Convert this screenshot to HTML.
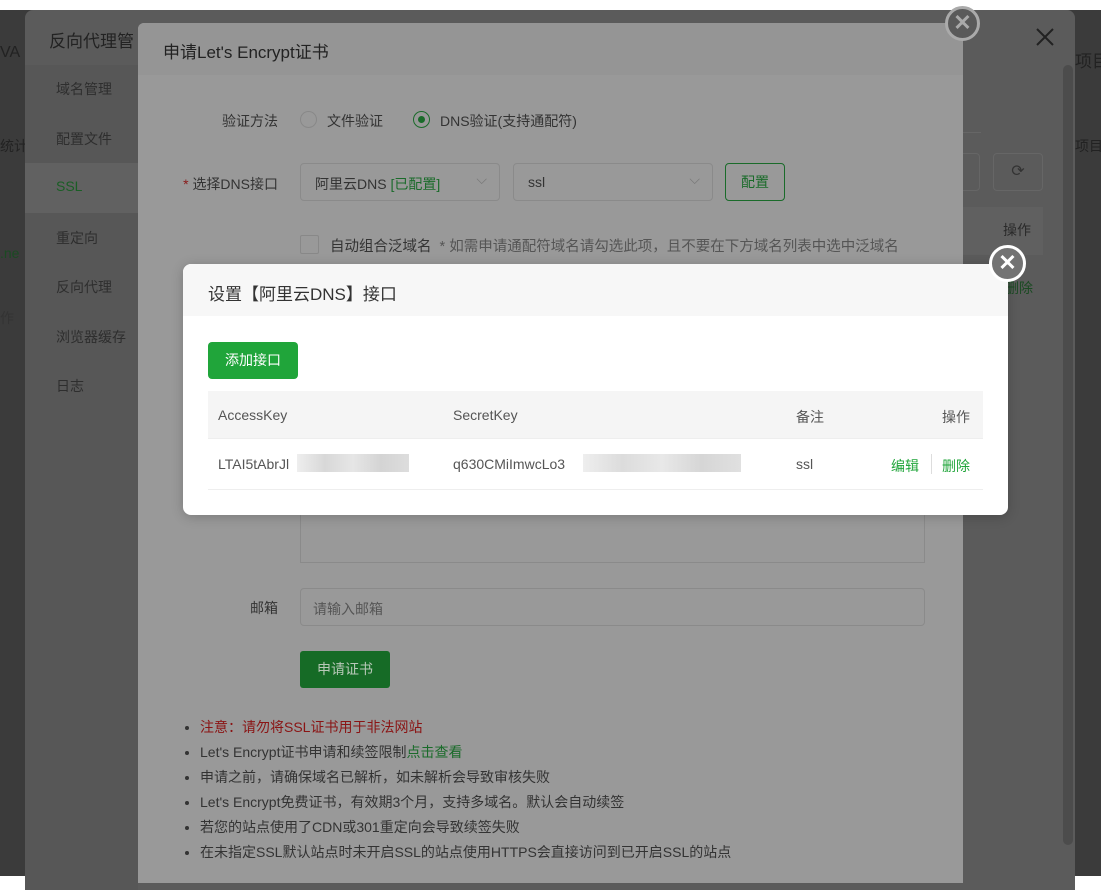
<!DOCTYPE html>
<html><head><meta charset="utf-8"><style>
*{margin:0;padding:0;box-sizing:border-box}
body{width:1101px;height:876px;overflow:hidden;background:#fff;position:relative;font-family:"Liberation Sans","Noto Sans CJK SC",sans-serif;color:#333}
.abs{position:absolute;white-space:nowrap}
.page{left:0;top:10px;width:1101px;height:866px;background:#3b3b3b}
.outer{left:25px;top:10px;width:1050px;height:880px;background:#5b5b5b;border-radius:8px 8px 0 0;overflow:hidden}
.side{left:0;top:55px;width:113px;height:830px;background:#575757}
.side div{position:absolute;left:31px;font-size:14px;color:#2e2e2e}
.mid{left:138px;top:23px;width:825px;height:860px;background:#999;border-radius:6px 6px 0 0;overflow:hidden}
.midh{left:0;top:0;width:825px;height:52px;background:#959595;font-size:17px;color:#222;padding:15px 0 0 25px}
.lbl{font-size:14px;color:#333;text-align:right;width:140px}
.inp{border:1px solid #8a8a8a;border-radius:4px}
.inner{left:183px;top:264px;width:825px;height:251px;background:#fff;border-radius:8px;overflow:hidden;box-shadow:0 2px 12px rgba(0,0,0,.2)}
.close{border-radius:50%;}
ul li{font-size:14px;line-height:25px;color:#333}
</style></head><body>
<div class="abs page"></div>
<div class="abs" style="left:0;top:44px;font-size:16px;color:#222">VA</div>
<div class="abs" style="left:0;top:136px;font-size:14px;color:#222">统计</div>
<div class="abs" style="left:0;top:245px;font-size:14px;color:#1a4a22">.ne</div>
<div class="abs" style="left:0;top:308px;font-size:14px;color:#333">作</div>
<div class="abs" style="left:1075px;top:47px;font-size:17px;color:#222">项目</div>
<div class="abs" style="left:1075px;top:136px;font-size:14px;color:#222">项目</div>
<div class="abs outer">
 <div class="abs" style="left:24px;top:17px;font-size:17px;color:#222">反向代理管</div>
 <div class="abs side">
  <div style="top:14px">域名管理</div>
  <div style="top:64px">配置文件</div>
  <div style="left:0;top:98px;width:113px;height:50px;background:#616161"></div>
  <div style="top:113px;color:#1a5e25">SSL</div>
  <div style="top:163px">重定向</div>
  <div style="top:212px">反向代理</div>
  <div style="top:262px">浏览器缓存</div>
  <div style="top:311px">日志</div>
 </div>
 <svg class="abs" style="left:1010px;top:17px" width="20" height="20"><path d="M2 2L18 18M18 2L2 18" stroke="#222" stroke-width="2"/></svg>
 <div class="abs" style="left:938px;top:122px;width:18px;height:1px;background:#666"></div>
 <div class="abs inp" style="left:915px;top:143px;width:40px;height:38px;border-color:#666"></div>
 <div class="abs inp" style="left:968px;top:143px;width:50px;height:38px;border-color:#666;text-align:center;line-height:36px;color:#333;font-size:16px">⟳</div>
 <div class="abs" style="left:938px;top:197px;width:80px;height:48px;background:#606060"></div>
 <div class="abs" style="left:978px;top:210px;font-size:14px;color:#2a2a2a">操作</div>
 <div class="abs" style="left:980px;top:268px;font-size:14px;color:#1a4a22">删除</div>
 <div class="abs" style="left:1038px;top:55px;width:10px;height:780px;background:#4c4c4c;border-radius:5px"></div>
</div>
<div class="abs mid">
 <div class="abs midh">申请Let's Encrypt证书</div>
 <div class="abs lbl" style="left:0;top:88px">验证方法</div>
 <div class="abs" style="left:162px;top:88px;width:17px;height:17px;border:1px solid #888;border-radius:50%"></div>
 <div class="abs" style="left:189px;top:88px;font-size:14px">文件验证</div>
 <div class="abs" style="left:275px;top:88px;width:17px;height:17px;border:1px solid #1a6b2a;border-radius:50%"><div style="margin:4px;width:7px;height:7px;border-radius:50%;background:#1a6b2a"></div></div>
 <div class="abs" style="left:302px;top:88px;font-size:14px">DNS验证(支持通配符)</div>
 <div class="abs lbl" style="left:0;top:151px"><span style="color:#8a1a1a">* </span>选择DNS接口</div>
 <div class="abs inp" style="left:162px;top:140px;width:200px;height:38px;padding:10px 14px;font-size:14px;color:#333">阿里云DNS <span style="color:#1a6b2a">[已配置]</span><span style="position:absolute;right:12px;top:7px;color:#777">⌵</span></div>
 <div class="abs inp" style="left:375px;top:140px;width:200px;height:38px;padding:10px 14px;font-size:14px;color:#333">ssl<span style="position:absolute;right:12px;top:7px;color:#777">⌵</span></div>
 <div class="abs" style="left:587px;top:140px;width:60px;height:38px;border:1px solid #1a6b2a;border-radius:4px;color:#1a6b2a;font-size:14px;text-align:center;line-height:36px">配置</div>
 <div class="abs" style="left:162px;top:212px;width:19px;height:19px;border:1px solid #888;border-radius:2px"></div>
 <div class="abs" style="left:192px;top:212px;font-size:14.5px">自动组合泛域名 <span style="color:#555">&nbsp;* 如需申请通配符域名请勾选此项，且不要在下方域名列表中选中泛域名</span></div>
 <div class="abs" style="left:162px;top:260px;width:625px;height:280px;border:1px solid #8a8a8a;border-top:none"></div>
 <div class="abs lbl" style="left:0;top:575px">邮箱</div>
 <div class="abs inp" style="left:162px;top:565px;width:625px;height:38px;padding:10px 12px;font-size:14px;color:#555">请输入邮箱</div>
 <div class="abs" style="left:162px;top:628px;width:90px;height:37px;background:#166b26;border-radius:3px;color:#b8c8b8;font-size:14px;text-align:center;line-height:37px">申请证书</div>
 <ul class="abs" style="left:62px;top:692px;list-style:disc;padding-left:0">
  <li><span style="color:#8a1414">注意：请勿将SSL证书用于非法网站</span></li>
  <li>Let's Encrypt证书申请和续签限制<span style="color:#1a6b2a">点击查看</span></li>
  <li>申请之前，请确保域名已解析，如未解析会导致审核失败</li>
  <li>Let's Encrypt免费证书，有效期3个月，支持多域名。默认会自动续签</li>
  <li>若您的站点使用了CDN或301重定向会导致续签失败</li>
  <li>在未指定SSL默认站点时未开启SSL的站点使用HTTPS会直接访问到已开启SSL的站点</li>
 </ul>
</div>
<div class="abs close" style="left:945px;top:6px;width:35px;height:35px;background:#5a5a5a;border:3px solid #aaa;color:#aaa;text-align:center;line-height:28px;font-size:22px;font-weight:bold">✕</div>
<div class="abs inner">
 <div class="abs" style="left:0;top:0;width:825px;height:52px;background:#f7f7f7;font-size:17px;color:#333;padding:16px 0 0 25px">设置【阿里云DNS】接口</div>
 <div class="abs" style="left:25px;top:78px;width:90px;height:37px;background:#20a53a;border-radius:4px;color:#fff;font-size:14px;text-align:center;line-height:37px">添加接口</div>
 <div class="abs" style="left:25px;top:127px;width:775px;height:48px;background:#f5f5f5;border-bottom:1px solid #eee"></div>
 <div class="abs" style="left:35px;top:143px;font-size:14px;color:#555">AccessKey</div>
 <div class="abs" style="left:270px;top:143px;font-size:14px;color:#555">SecretKey</div>
 <div class="abs" style="left:613px;top:143px;font-size:14px;color:#555">备注</div>
 <div class="abs" style="left:759px;top:143px;font-size:14px;color:#555">操作</div>
 <div class="abs" style="left:35px;top:192px;font-size:14px;color:#555">LTAI5tAbrJl</div>
 <div class="abs" style="left:114px;top:190px;width:112px;height:18px;background:linear-gradient(90deg,#eee,#d8d8d8,#e6e6e6,#d4d4d4,#ddd)"></div>
 <div class="abs" style="left:270px;top:192px;font-size:14px;color:#555">q630CMiImwcLo3</div>
 <div class="abs" style="left:400px;top:190px;width:158px;height:18px;background:linear-gradient(90deg,#eee,#dcdcdc,#e8e8e8,#d6d6d6,#e0e0e0)"></div>
 <div class="abs" style="left:613px;top:192px;font-size:14px;color:#555">ssl</div>
 <div class="abs" style="left:708px;top:192px;font-size:14px;color:#20a53a">编辑</div>
 <div class="abs" style="left:748px;top:190px;width:1px;height:20px;background:#ddd"></div>
 <div class="abs" style="left:759px;top:192px;font-size:14px;color:#20a53a">删除</div>
 <div class="abs" style="left:25px;top:225px;width:775px;height:1px;background:#eee"></div>
</div>
<div class="abs close" style="left:989px;top:245px;width:37px;height:37px;background:#737373;border:3px solid #fff;color:#fff;text-align:center;line-height:30px;font-size:22px;font-weight:bold">✕</div>
</body></html>
